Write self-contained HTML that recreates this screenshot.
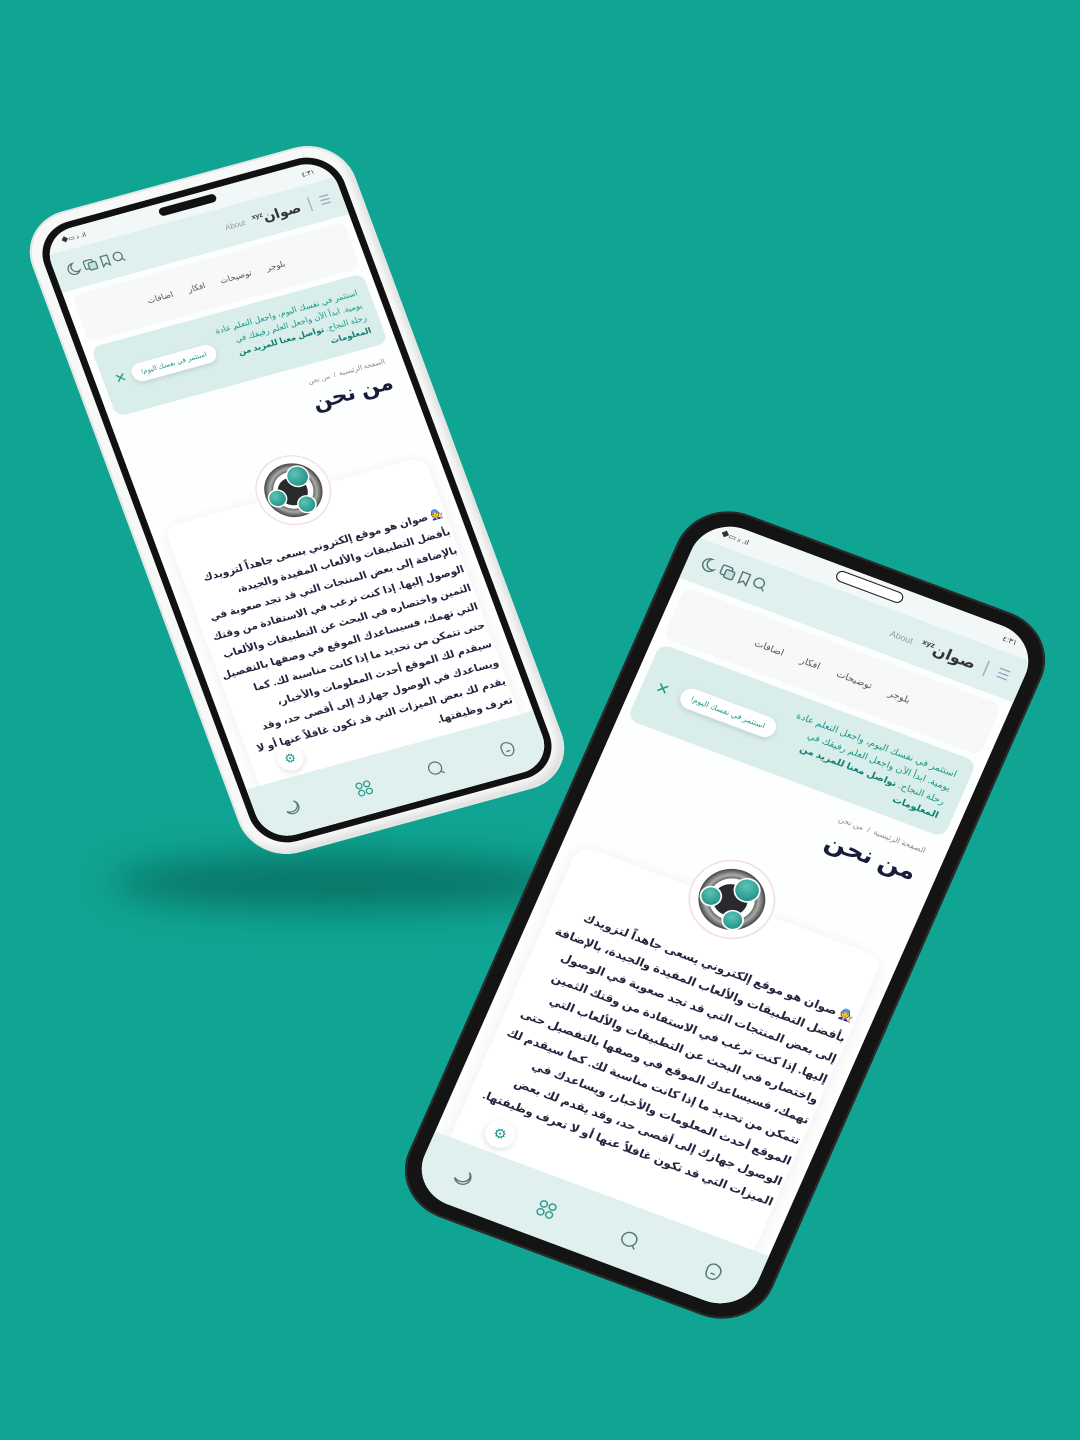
<!DOCTYPE html>
<html><head><meta charset="utf-8">
<style>
*{box-sizing:border-box;margin:0;padding:0}
html,body{width:1080px;height:1440px;overflow:hidden;background:#10a592;font-family:"Liberation Sans","Noto Sans CJK SC","DejaVu Sans",sans-serif}
.shadow{position:absolute;left:110px;top:855px;width:470px;height:55px;border-radius:50%;background:rgba(0,60,50,.45);filter:blur(18px)}
.phone{position:absolute;width:340px;height:720px;left:0;top:0;transform-origin:170px 360px;border-radius:48px}
.p1{background:#f7f8f8;box-shadow:inset 0 0 0 2px #e3e5e5, inset -4px -6px 8px #dcdede}
.p2{background:#141414;box-shadow:inset 0 0 0 2px #2a2a2a}
.p1 .bz{position:absolute;inset:12px;border-radius:38px;background:#111}
.scr{position:absolute;inset:19px;border-radius:32px;overflow:hidden;background:#fdfefe;direction:rtl}
.p2 .scr{inset:14px;border-radius:36px}
.status{height:22px;background:#f2f7f7;font-size:7px;color:#333;display:flex;justify-content:space-between;align-items:center;padding:0 18px;direction:ltr;position:relative}
.notch{position:absolute;left:50%;top:5px;width:60px;height:9px;margin-left:-30px;border-radius:6px;background:#111}
.p2 .notch{background:#fff;box-shadow:0 0 0 1px #222}
.hdr{height:42px;background:#dff0ef;display:flex;align-items:center;justify-content:space-between;padding:0 12px}
.hdr .r{display:flex;align-items:center;gap:8px;color:#334}
.hdr .logo{font-size:14px;font-weight:bold;color:#333}
.hdr .logo sup{font-size:7px}
.hdr .about{font-size:8px;color:#99a}
.hdr .ic{display:flex;gap:8px;direction:ltr}
.nav{height:52px;margin:6px 8px 0;background:#f7f9f9;border-radius:8px;display:flex;justify-content:center;align-items:center;gap:16px;font-size:8.5px;color:#555}
.ban{margin:6px 8px 0;height:78px;background:#d9eeeb;border-radius:10px;display:flex;align-items:center;justify-content:space-between;padding:0 12px}
.ban .t{font-size:8.5px;line-height:14px;color:#1a9888;width:150px}
.ban .t b{color:#127f72}
.ban .btn{background:#fff;border-radius:12px;padding:6px 10px;font-size:7px;color:#1a9888;box-shadow:0 2px 5px rgba(0,0,0,.12)}
.ban .x{color:#1a9888;font-size:14px}
.bc{margin:14px 18px 0;font-size:7px;color:#888}
.ttl{margin:6px 18px 0;font-size:22px;font-weight:bold;color:#1a1d3a}
.card{position:absolute;left:14px;right:14px;top:332px;height:400px;background:#fff;border-radius:14px;box-shadow:0 2px 14px rgba(0,0,0,.07)}
.lg{position:absolute;left:50%;top:292px;margin-left:-38px;width:76px;height:76px}
.txt{position:absolute;left:16px;right:16px;top:385px;font-size:10.6px;font-weight:bold;line-height:21px;color:#23263f;text-align:right;z-index:2}
.bot{position:absolute;left:0;right:0;bottom:0;height:60px;background:#dff0ef;display:flex;justify-content:space-around;align-items:center;direction:ltr;padding-top:4px}
.gear{position:absolute;left:40px;bottom:66px;width:26px;height:26px;border-radius:50%;background:#fff;box-shadow:0 2px 6px rgba(0,0,0,.12);z-index:3;display:flex;align-items:center;justify-content:center;color:#1a9888;font-size:13px}
</style></head><body>
<div class="shadow"></div>

<!-- Phone 1 -->
<div class="phone p1" style="transform:translate(127px,140px) matrix(0.95,-0.26,0.33,0.89,0,0)">
 <div class="bz"></div>
 <div class="scr">
  <div class="status"><span>◆▭ ᵢₗ .ıl</span><div class="notch"></div><span>٤:٣١</span></div>
  <div class="hdr">
   <div class="r"><span style="color:#8ab;font-size:13px">☰</span><span style="color:#aaa">|</span><span class="logo">صوان<sup>xyz</sup></span><span class="about">About</span></div>
   <div class="ic">
    <svg width="62" height="16" viewBox="0 0 62 16" fill="none" stroke-width="1.3"><path d="M8 2a6 6 0 1 0 5 9a5 5 0 0 1-5-9z" stroke="#577"/><rect x="19" y="3" width="9" height="9" rx="1.5" stroke="#577"/><rect x="23" y="6" width="8" height="8" rx="1.5" fill="#bfe3df" stroke="#577"/><path d="M37 3h7v11l-3.5-3-3.5 3z" stroke="#577"/><circle cx="54" cy="7.5" r="4.5" stroke="#577"/><path d="M57.5 11l2.5 2.5" stroke="#577"/></svg>
   </div>
  </div>
  <div class="nav"><span>بلوجر</span><span>توضيحات</span><span>افكار</span><span>اضافات</span></div>
  <div class="ban"><div class="t">استثمر في نفسك اليوم، واجعل التعلم عادة يومية. ابدأ الآن واجعل العلم رفيقك في رحلة النجاح. <b>تواصل معنا للمزيد من المعلومات</b></div><div class="btn">استثمر في نفسك اليوم!</div><div class="x">✕</div></div>
  <div class="bc">الصفحة الرئيسية &nbsp;/&nbsp; من نحن</div>
  <div class="ttl">من نحن</div>
  <div class="card"></div>
  <svg class="lg" viewBox="0 0 76 76"><defs><radialGradient id="rg" cx=".5" cy=".5" r=".5"><stop offset=".6" stop-color="#333"/><stop offset=".8" stop-color="#aaa"/><stop offset="1" stop-color="#444"/></radialGradient><radialGradient id="tg" cx=".4" cy=".35" r=".7"><stop offset="0" stop-color="#5cc4b6"/><stop offset="1" stop-color="#1e8f83"/></radialGradient></defs><circle cx="38" cy="38" r="37" fill="#fff" stroke="#f3dfe4" stroke-width="1.5"/><circle cx="38" cy="38" r="29" fill="url(#rg)"/><circle cx="38" cy="38" r="20" fill="#fff"/><circle cx="37" cy="39" r="15" fill="#2a2a2e"/><circle cx="47" cy="25" r="11" fill="url(#tg)" stroke="#fff" stroke-width="1.5"/><circle cx="20" cy="42" r="9" fill="url(#tg)" stroke="#fff" stroke-width="1.5"/><circle cx="46" cy="56" r="9" fill="url(#tg)" stroke="#fff" stroke-width="1.5"/></svg>
  <div class="bot">
   <svg width="20" height="20" viewBox="0 0 20 20" fill="none" stroke="#577" stroke-width="1.3"><path d="M13 3a7 7 0 1 1-10 9a7 6 0 0 0 10-9z"/></svg>
   <svg width="20" height="20" viewBox="0 0 20 20" fill="none" stroke="#2a9a8c" stroke-width="1.3"><circle cx="6" cy="6" r="3"/><circle cx="14" cy="6" r="3"/><circle cx="6" cy="14" r="3"/><circle cx="14" cy="14" r="3"/></svg>
   <svg width="20" height="20" viewBox="0 0 20 20" fill="none" stroke="#577" stroke-width="1.3"><circle cx="9" cy="9" r="6.5"/><path d="M13.5 13.5l3 3"/></svg>
   <svg width="20" height="20" viewBox="0 0 20 20" fill="none" stroke="#577" stroke-width="1.3"><path d="M4 8c0-4 4-6 7-5s6 3 5 8-4 7-8 6-4-5-4-9z"/><path d="M8 12h4"/></svg>
  </div>
  <div class="gear">⚙</div>
  <div class="txt">🧑‍🔧 صوان هو موقع إلكتروني يسعى جاهداً لتزويدك بأفضل التطبيقات والألعاب المفيدة والجيدة، بالإضافة إلى بعض المنتجات التي قد تجد صعوبة في الوصول إليها. إذا كنت ترغب في الاستفادة من وقتك الثمين واختصاره في البحث عن التطبيقات والألعاب التي تهمك، فسيساعدك الموقع في وصفها بالتفصيل حتى تتمكن من تحديد ما إذا كانت مناسبة لك. كما سيقدم لك الموقع أحدث المعلومات والأخبار، ويساعدك في الوصول جهازك إلى أقصى حد، وقد يقدم لك بعض الميزات التي قد تكون غافلاً عنها أو لا تعرف وظيفتها.</div>
 </div>
</div>

<!-- Phone 2 -->
<div class="phone p2" style="transform:translate(555px,555px) matrix(1.07,0.4,-0.43,0.975,0,0)">
 <div class="scr">
  <div class="status"><span>◆▭ ᵢₗ .ıl</span><div class="notch"></div><span>٤:٣١</span></div>
  <div class="hdr">
   <div class="r"><span style="color:#8ab;font-size:13px">☰</span><span style="color:#aaa">|</span><span class="logo">صوان<sup>xyz</sup></span><span class="about">About</span></div>
   <div class="ic">
    <svg width="62" height="16" viewBox="0 0 62 16" fill="none" stroke-width="1.3"><path d="M8 2a6 6 0 1 0 5 9a5 5 0 0 1-5-9z" stroke="#577"/><rect x="19" y="3" width="9" height="9" rx="1.5" stroke="#577"/><rect x="23" y="6" width="8" height="8" rx="1.5" fill="#bfe3df" stroke="#577"/><path d="M37 3h7v11l-3.5-3-3.5 3z" stroke="#577"/><circle cx="54" cy="7.5" r="4.5" stroke="#577"/><path d="M57.5 11l2.5 2.5" stroke="#577"/></svg>
   </div>
  </div>
  <div class="nav"><span>بلوجر</span><span>توضيحات</span><span>افكار</span><span>اضافات</span></div>
  <div class="ban"><div class="t">استثمر في نفسك اليوم، واجعل التعلم عادة يومية. ابدأ الآن واجعل العلم رفيقك في رحلة النجاح. <b>تواصل معنا للمزيد من المعلومات</b></div><div class="btn">استثمر في نفسك اليوم!</div><div class="x">✕</div></div>
  <div class="bc">الصفحة الرئيسية &nbsp;/&nbsp; من نحن</div>
  <div class="ttl">من نحن</div>
  <div class="card"></div>
  <svg class="lg" viewBox="0 0 76 76"><circle cx="38" cy="38" r="37" fill="#fff" stroke="#f3dfe4" stroke-width="1.5"/><circle cx="38" cy="38" r="29" fill="url(#rg)"/><circle cx="38" cy="38" r="20" fill="#fff"/><circle cx="37" cy="39" r="15" fill="#2a2a2e"/><circle cx="47" cy="25" r="11" fill="url(#tg)" stroke="#fff" stroke-width="1.5"/><circle cx="20" cy="42" r="9" fill="url(#tg)" stroke="#fff" stroke-width="1.5"/><circle cx="46" cy="56" r="9" fill="url(#tg)" stroke="#fff" stroke-width="1.5"/></svg>
  <div class="bot">
   <svg width="20" height="20" viewBox="0 0 20 20" fill="none" stroke="#577" stroke-width="1.3"><path d="M13 3a7 7 0 1 1-10 9a7 6 0 0 0 10-9z"/></svg>
   <svg width="20" height="20" viewBox="0 0 20 20" fill="none" stroke="#2a9a8c" stroke-width="1.3"><circle cx="6" cy="6" r="3"/><circle cx="14" cy="6" r="3"/><circle cx="6" cy="14" r="3"/><circle cx="14" cy="14" r="3"/></svg>
   <svg width="20" height="20" viewBox="0 0 20 20" fill="none" stroke="#577" stroke-width="1.3"><circle cx="9" cy="9" r="6.5"/><path d="M13.5 13.5l3 3"/></svg>
   <svg width="20" height="20" viewBox="0 0 20 20" fill="none" stroke="#577" stroke-width="1.3"><path d="M4 8c0-4 4-6 7-5s6 3 5 8-4 7-8 6-4-5-4-9z"/><path d="M8 12h4"/></svg>
  </div>
  <div class="gear">⚙</div>
  <div class="txt">🧑‍🔧 صوان هو موقع إلكتروني يسعى جاهداً لتزويدك بأفضل التطبيقات والألعاب المفيدة والجيدة، بالإضافة إلى بعض المنتجات التي قد تجد صعوبة في الوصول إليها. إذا كنت ترغب في الاستفادة من وقتك الثمين واختصاره في البحث عن التطبيقات والألعاب التي تهمك، فسيساعدك الموقع في وصفها بالتفصيل حتى تتمكن من تحديد ما إذا كانت مناسبة لك. كما سيقدم لك الموقع أحدث المعلومات والأخبار، ويساعدك في الوصول جهازك إلى أقصى حد، وقد يقدم لك بعض الميزات التي قد تكون غافلاً عنها أو لا تعرف وظيفتها.</div>
 </div>
</div>
</body></html>
